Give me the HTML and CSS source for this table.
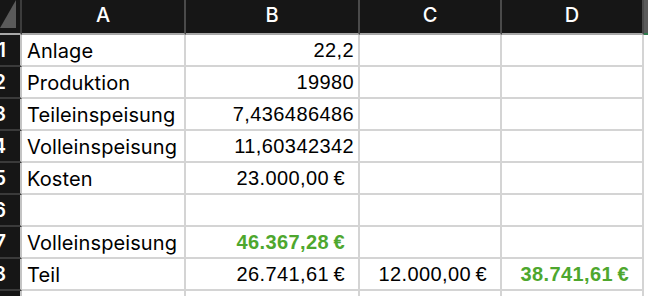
FILE: index.html
```html
<!DOCTYPE html>
<html lang="de">
<head>
<meta charset="utf-8">
<link rel="stylesheet" href="styles.css">
</head>
<body>
<div class="sheet">
  <div class="hd corner"><svg class="tri" width="20" height="33" viewBox="0 0 20 33"><polygon points="16,0 16,28 0,28" fill="#5a5a5a"/></svg></div>
  <div class="hd col">A</div>
  <div class="hd col">B</div>
  <div class="hd col">C</div>
  <div class="hd col">D</div>
  <div class="hd edge"></div>

  <div class="rh"><span>1</span></div><div class="c lbl">Anlage</div><div class="c num">22,2</div><div class="c"></div><div class="c"></div><div class="x"></div>
  <div class="rh"><span>2</span></div><div class="c lbl">Produktion</div><div class="c num">19980</div><div class="c"></div><div class="c"></div><div class="x"></div>
  <div class="rh"><span>3</span></div><div class="c lbl">Teileinspeisung</div><div class="c num">7,436486486</div><div class="c"></div><div class="c"></div><div class="x"></div>
  <div class="rh"><span>4</span></div><div class="c lbl">Volleinspeisung</div><div class="c num">11,60342342</div><div class="c"></div><div class="c"></div><div class="x"></div>
  <div class="rh"><span>5</span></div><div class="c lbl">Kosten</div><div class="c num cur">23.000,00&#8201;€</div><div class="c"></div><div class="c"></div><div class="x"></div>
  <div class="rh"><span>6</span></div><div class="c lbl"></div><div class="c"></div><div class="c"></div><div class="c"></div><div class="x"></div>
  <div class="rh"><span>7</span></div><div class="c lbl">Volleinspeisung</div><div class="c num cur good">46.367,28&#8201;€</div><div class="c"></div><div class="c"></div><div class="x"></div>
  <div class="rh"><span>8</span></div><div class="c lbl">Teil</div><div class="c num cur">26.741,61&#8201;€</div><div class="c num cur">12.000,00&#8201;€</div><div class="c num cur good">38.741,61&#8201;€</div><div class="x"></div>
  <div class="rh"><span>9</span></div><div class="c lbl"></div><div class="c"></div><div class="c"></div><div class="c"></div><div class="x"></div>
</div>
</body>
</html>
```

FILE: styles.css
```css
html, body {
  margin: 0;
  padding: 0;
  background: #ffffff;
  overflow: hidden;
}
.sheet {
  display: grid;
  grid-template-columns: 22px 164px 174px 142px 142px 4px;
  grid-template-rows: 35px repeat(9, 32px);
  width: 648px;
  height: 296px;
  overflow: hidden;
  font-family: Inter, "Open Sans", sans-serif;
}
.hd {
  background: #161616;
  border-bottom: 2px solid #a8a8a8;
  box-sizing: border-box;
  color: #ffffff;
}
.corner {
  border-right: 2px solid #3c3c3c;
}
.tri {
  display: block;
}
.col {
  border-right: 2px solid #4a4a4a;
  display: flex;
  align-items: center;
  justify-content: center;
  font-size: 20px;
  font-weight: 500;
  padding-bottom: 3px;
}
.edge {
  background: #5a5a5a;
  border-bottom: 2px solid #2b7a4b;
}
.rh {
  background: #161616;
  color: #ffffff;
  border-right: 2px solid #c4c4c4;
  border-bottom: 2px solid #3a3a3a;
  box-sizing: border-box;
  overflow: hidden;
  display: flex;
  align-items: center;
  justify-content: flex-end;
  padding-right: 14px;
  font-size: 20px;
  font-weight: 600;
}
.c {
  border-right: 2px solid #d4d4d4;
  border-bottom: 2px solid #d4d4d4;
  box-sizing: border-box;
  display: flex;
  align-items: center;
  color: #000000;
  white-space: nowrap;
  overflow: hidden;
}
.lbl {
  padding-left: 5px;
  padding-top: 1px;
  font-size: 20px;
  letter-spacing: 0.1px;
}
.num {
  justify-content: flex-end;
  padding-right: 4px;
  font-family: "Liberation Sans", Arial, sans-serif;
  font-size: 20px;
  letter-spacing: 0.4px;
}
.cur {
  padding-right: 13px;
}
.good {
  color: #4ea72e;
  font-weight: 700;
}
.x {
  background: #ffffff;
}
```
